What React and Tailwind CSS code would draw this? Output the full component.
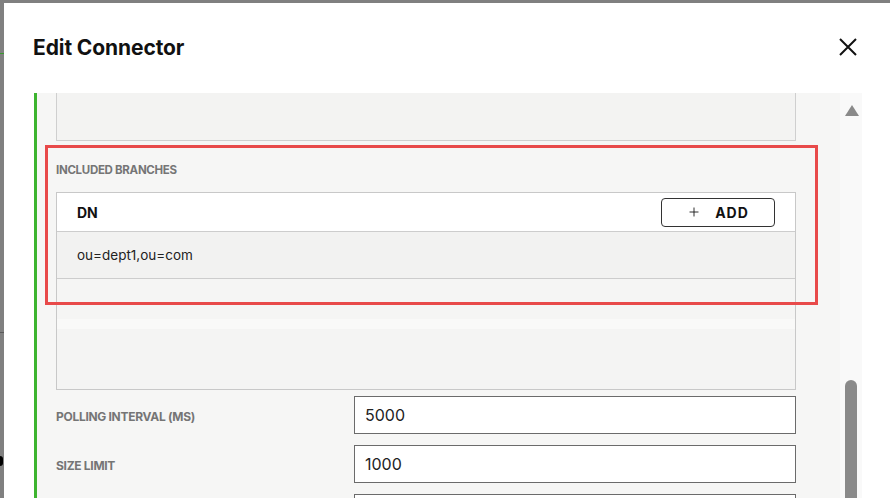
import { Plus } from "lucide-react";

const font = { fontFamily: "Inter, 'Noto Sans', sans-serif" };

function FieldRow({ label, value }) {
  return (
    <div className="flex items-center h-[38px]">
      <div className="w-[298px] pt-[3px] text-[12px] font-bold tracking-[-0.3px] text-[#757575]">{label}</div>
      <div className="flex-1 h-full border border-[#6b6b6b] bg-white flex items-center px-[10px] text-[16px] text-[#222]">
        {value}
      </div>
    </div>
  );
}

export default function App() {
  return (
    <div className="relative w-[890px] h-[498px] overflow-hidden bg-[#808080] pt-[3px] pl-[4px]" style={font}>
      {/* backdrop leftovers */}
      <div className="absolute left-0 top-[53px] w-[4px] h-[1px] bg-[#3a9a2e]" />
      <div className="absolute left-0 top-[332px] w-[4px] h-[1px] bg-[#5a5a5a]" />
      <div className="absolute left-0 top-[456px] w-[3px] h-[10px] rounded-r-full bg-black" />

      <div className="flex flex-col h-full bg-white">
        <div className="flex items-start justify-between h-[90px] pt-[31px] pl-[29px] pr-[33px]">
          <h1 className="text-[21px] leading-[28px] font-bold text-[#111] tracking-[-0.1px]">Edit Connector</h1>
          <svg className="mt-[4px]" width="18" height="18" viewBox="0 0 18 18">
            <path d="M1 1 L17 17 M17 1 L1 17" stroke="#111" strokeWidth="2" fill="none" />
          </svg>
        </div>

        <div className="flex flex-1 ml-[30px] mr-[28px] min-h-0">
          <div className="relative flex-1 border-l-[3px] border-[#3db42f] bg-[#f6f6f5] pl-[19px] pr-[44px]">
            <div className="h-[48px] border-x border-b border-[#cfcfcf] bg-[#f3f3f2]" />

            <div className="pt-[22px] pb-[15px] text-[11.5px] leading-[14px] font-bold tracking-[-0.3px] text-[#757575]">
              INCLUDED BRANCHES
            </div>

            <div className="h-[198px] border border-[#c8c8c8] flex flex-col">
              <div className="h-[39px] shrink-0 bg-white border-b border-[#cdcdcd] flex items-center justify-between pl-[20px] pr-[20px]">
                <span className="text-[14px] font-bold text-[#111]">DN</span>
                <button className="h-[29px] w-[114px] rounded-[4px] border border-[#333] bg-white flex items-center justify-center gap-[14px] text-[14px] font-bold tracking-[1px] text-[#111]">
                  <Plus className="w-[14px] h-[14px]" strokeWidth={1.5} />
                  ADD
                </button>
              </div>
              <div className="h-[47px] shrink-0 bg-[#f2f2f1] border-b border-[#cdcdcd] flex items-center pl-[20px] text-[13.5px] text-[#222]">
                ou=dept1,ou=com
              </div>
              <div className="flex-1 flex flex-col">
                <div className="h-[40px] bg-[#f5f5f4]" />
                <div className="h-[10px] bg-[#f9f9f8]" />
                <div className="flex-1 bg-[#f4f4f3]" />
              </div>
            </div>

            <div className="flex flex-col gap-[11px] pt-[6px]">
              <FieldRow label="POLLING INTERVAL (MS)" value="5000" />
              <FieldRow label="SIZE LIMIT" value="1000" />
              <FieldRow label="" value="" />
            </div>

            {/* review highlight */}
            <div className="absolute left-[8px] top-[52px] w-[773px] h-[160px] border-[3px] border-[#e84a4a] pointer-events-none" />
          </div>

          <div className="relative w-[22px] bg-[#f9f9f9]">
            <svg className="absolute left-[5px] top-[12px]" width="14" height="11" viewBox="0 0 14 11">
              <polygon points="7,0 14,11 0,11" fill="#8a8a8a" />
            </svg>
            <div className="absolute left-[5px] top-[287px] w-[12px] h-[200px] rounded-t-full bg-[#8a8a8a]" />
          </div>
        </div>
      </div>
    </div>
  );
}
